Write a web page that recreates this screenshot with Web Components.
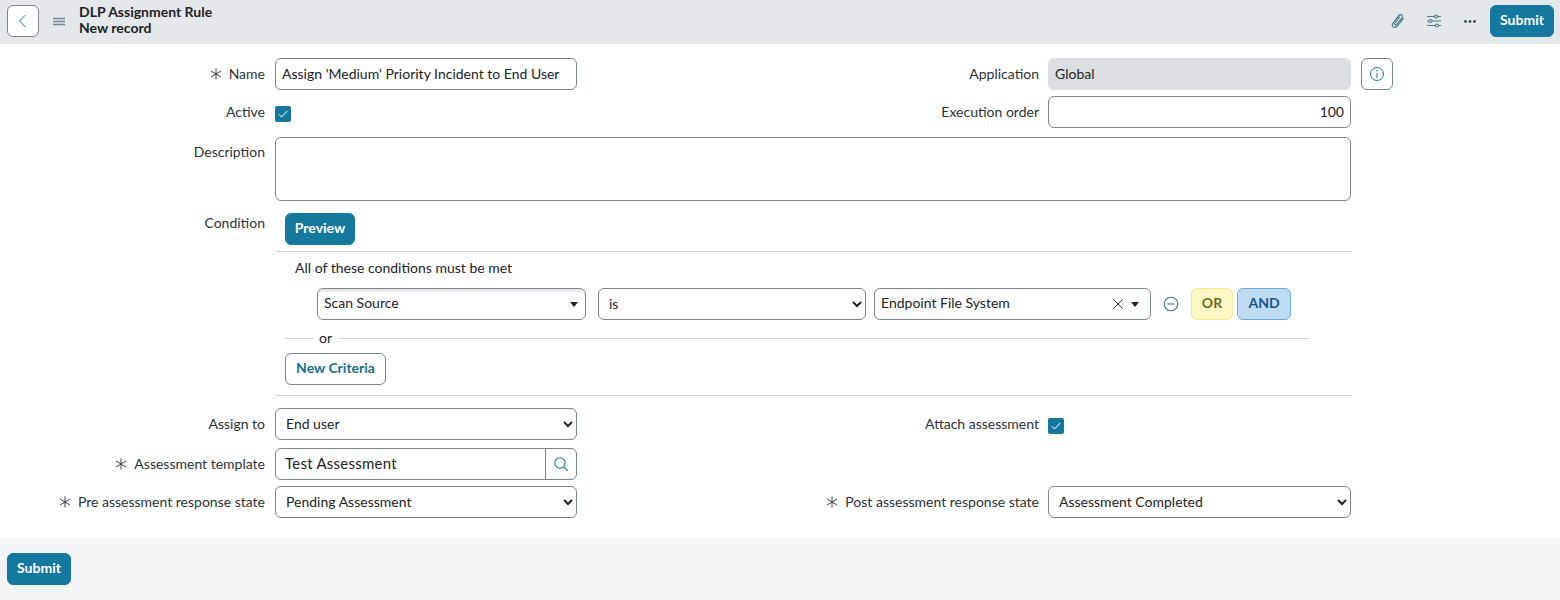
<!DOCTYPE html>
<html lang="en">
<head>
<meta charset="utf-8">
<title>DLP Assignment Rule</title>
<style>
  html, body { margin: 0; padding: 0; background: #f4f5f7; }
  body { font-family: Lato, "Noto Sans", sans-serif; font-size: 14px; color: #1c2327; }
</style>
</head>
<body>

<record-header title-text="DLP Assignment Rule" subtitle="New record"></record-header>

<record-form>
  <form-row style="--row-gap: 6px">
    <field-label slot="label" required>Name</field-label>
    <text-field slot="control" value="Assign 'Medium' Priority Incident to End User"></text-field>
    <field-label slot="right-label">Application</field-label>
    <text-field slot="right-control" value="Global" readonly></text-field>
    <icon-box slot="extra"></icon-box>
  </form-row>
  <form-row style="--row-gap: 9px">
    <field-label slot="label">Active</field-label>
    <check-box slot="control"></check-box>
    <field-label slot="right-label">Execution order</field-label>
    <text-field slot="right-control" value="100" align="right"></text-field>
  </form-row>
  <form-row style="--row-gap: 12px" wide>
    <field-label slot="label" top style="--label-shift: -1px">Description</field-label>
    <text-area-field slot="control"></text-area-field>
  </form-row>
  <form-row wide style="--row-gap: 12px">
    <field-label slot="label" top style="--label-shift: -6px">Condition</field-label>
    <condition-builder slot="control"></condition-builder>
  </form-row>
  <form-row style="--row-gap: 8px">
    <field-label slot="label">Assign to</field-label>
    <select-field slot="control" options="End user"></select-field>
    <field-label slot="right-label">Attach assessment</field-label>
    <check-box slot="right-control"></check-box>
  </form-row>
  <form-row style="--row-gap: 6px">
    <field-label slot="label" required>Assessment template</field-label>
    <lookup-field slot="control" value="Test Assessment"></lookup-field>
  </form-row>
  <form-row>
    <field-label slot="label" required>Pre assessment response state</field-label>
    <select-field slot="control" options="Pending Assessment"></select-field>
    <field-label slot="right-label" required>Post assessment response state</field-label>
    <select-field slot="right-control" options="Assessment Completed"></select-field>
  </form-row>
</record-form>

<record-footer></record-footer>

<script>
const TEAL = "#15799f";
const BORDER = "#7a868c";

class RecordHeader extends HTMLElement {
  constructor() {
    super();
    this.attachShadow({ mode: "open" });
  }
  connectedCallback() {
    this.shadowRoot.innerHTML = `
      <style>
        :host { display: flex; align-items: flex-start; height: 44px; background: #e4e8ea; padding: 5px 6px 0 7px; box-sizing: border-box; }
        .back { width: 32px; height: 32px; padding: 0; box-sizing: border-box; border: 1px solid ${BORDER}; border-radius: 6px; background: #fff; display: flex; align-items: center; justify-content: center; }
        .menu { margin: 11.5px 0 0 14px; width: 12px; height: 10px; display: flex; }
        .titles { margin: -1px 0 0 14px; font-weight: 700; font-size: 14px; line-height: 16px; color: #1c2327; }
        .tools { margin-left: auto; display: flex; align-items: center; }
        .tool { display: flex; width: 16px; height: 16px; }
        action-button { margin-left: 12px; }
      </style>
      <button class="back" aria-label="Back">
        <svg width="12" height="14" viewBox="0 0 12 14" fill="none" stroke="${TEAL}" stroke-width="1"><path d="M8.500 1 2.500 7l6 6"/></svg>
      </button>
      <span class="menu">
        <svg width="12" height="10" viewBox="0 0 12 10" fill="none" stroke="#6d8a98" stroke-width="1.400"><path d="M0 1.500h12M0 4.500h12M0 7.500h12"/></svg>
      </span>
      <div class="titles"><div>${this.getAttribute("title-text")}</div><div>${this.getAttribute("subtitle")}</div></div>
      <div class="tools">
        <span class="tool" style="margin-left:1px">
          <svg width="16" height="16" viewBox="0 0 16 16" fill="none" stroke="#3f7488" stroke-width="1.100" stroke-linecap="round"><path d="M13.200 5.600 7.400 12.900c-1.200 1.500-3 1.900-4.200 1-1.200-1-1.100-2.800.1-4.300l5.300-6.700c.9-1.100 2.300-1.500 3.200-.8.900.7.800 2.100-.1 3.200L6.600 11.400c-.5.600-1.300.8-1.800.4-.5-.4-.4-1.200.1-1.800l4.600-5.800"/></svg>
        </span>
        <span class="tool" style="margin-left:20px">
          <svg width="16" height="16" viewBox="0 0 16 16" fill="none" stroke="#4f7a8c" stroke-width="1.100"><path d="M1 3.500h7.500M11.500 3.500H15M1 8h2M6 8h9M1 12.500h8.500M12.500 12.500H15"/><circle cx="10" cy="3.500" r="1.500"/><circle cx="4.500" cy="8" r="1.500"/><circle cx="11" cy="12.500" r="1.500"/></svg>
        </span>
        <span class="tool" style="margin-left:20px">
          <svg width="16" height="16" viewBox="0 0 16 16" fill="#33566a"><circle cx="3.500" cy="8.500" r="1.400"/><circle cx="8" cy="8.500" r="1.400"/><circle cx="12.500" cy="8.500" r="1.400"/></svg>
        </span>
        <action-button style="--btn-width: 64px">Submit</action-button>
      </div>
    `;
  }
}

class ActionButton extends HTMLElement {
  constructor() {
    super();
    this.attachShadow({ mode: "open" });
  }
  connectedCallback() {
    const outline = this.hasAttribute("outline");
    this.shadowRoot.innerHTML = `
      <style>
        :host { display: inline-flex; }
        button {
          width: var(--btn-width, auto); height: 32px; padding: 0 1px 4px; border-radius: 6px; font: 700 14px Lato, sans-serif;
          border: 1px solid ${outline ? BORDER : TEAL};
          background: ${outline ? "#fff" : TEAL};
          color: ${outline ? "#146e8f" : "#fff"};
        }
      </style>
      <button type="button"><slot></slot></button>
    `;
  }
}

class RecordForm extends HTMLElement {
  constructor() {
    super();
    this.attachShadow({ mode: "open" });
    this.shadowRoot.innerHTML = `
      <style>
        :host { display: block; background: #fff; height: 495px; box-sizing: border-box; padding-top: 14px; }
      </style>
      <slot></slot>
    `;
  }
}

class FormRow extends HTMLElement {
  constructor() {
    super();
    this.attachShadow({ mode: "open" });
    this.shadowRoot.innerHTML = `
      <style>
        :host { display: grid; grid-template-columns: 265px 312px 462px 312px 42px; margin-bottom: var(--row-gap, 0); }
        .control { margin-left: 10px; width: 302px; }
        :host([wide]) .control { width: 1076px; }
        .rcontrol { margin-left: 9px; }
        .extra { margin-left: 10px; }
        :host([wide]) .rlabel, :host([wide]) .rcontrol, :host([wide]) .extra { display: none; }
      </style>
      <div><slot name="label"></slot></div>
      <div class="control"><slot name="control"></slot></div>
      <div class="rlabel"><slot name="right-label"></slot></div>
      <div class="rcontrol"><slot name="right-control"></slot></div>
      <div class="extra"><slot name="extra"></slot></div>
    `;
  }
}

class FieldLabel extends HTMLElement {
  constructor() {
    super();
    this.attachShadow({ mode: "open" });
  }
  connectedCallback() {
    const req = this.hasAttribute("required");
    this.shadowRoot.innerHTML = `
      <style>
        :host { display: flex; justify-content: flex-end; align-items: center; min-height: 32px; padding-bottom: 1px; box-sizing: border-box; font-size: 14px; color: #2a3338; white-space: nowrap; gap: 7px; }
        :host([top]) { align-items: flex-start; line-height: 32px; margin-top: var(--label-shift, 0); }
        svg { flex: none; }
      </style>
      ${req ? `<svg width="12" height="12" viewBox="0 0 12 12" fill="none" stroke="#3a4348" stroke-width="1"><path d="M6 .5v11M1 3l10 6M11 3 1 9"/></svg>` : ""}
      <span><slot></slot></span>
    `;
  }
}

class TextField extends HTMLElement {
  constructor() {
    super();
    this.attachShadow({ mode: "open" });
  }
  connectedCallback() {
    const readonly = this.hasAttribute("readonly");
    this.shadowRoot.innerHTML = `
      <style>
        :host { display: block; }
        .box {
          height: 32px; box-sizing: border-box; border: 1px solid ${readonly ? "#dcdfe2" : BORDER}; border-radius: 6px;
          background: ${readonly ? "#dcdfe2" : "#fff"}; padding: 0 6px 2px; display: flex; align-items: center;
          font-size: 14px; color: #1c2327; white-space: nowrap; overflow: hidden;
          justify-content: ${this.getAttribute("align") === "right" ? "flex-end" : "flex-start"};
        }
      </style>
      <div class="box">${this.getAttribute("value") || ""}</div>
    `;
  }
}

class TextAreaField extends HTMLElement {
  constructor() {
    super();
    this.attachShadow({ mode: "open" });
    this.shadowRoot.innerHTML = `
      <style>
        :host { display: block; }
        div { height: 64px; box-sizing: border-box; border: 1px solid ${BORDER}; border-radius: 6px; background: #fff; }
      </style>
      <div></div>
    `;
  }
}

class CheckBox extends HTMLElement {
  constructor() {
    super();
    this.attachShadow({ mode: "open" });
    this.shadowRoot.innerHTML = `
      <style>
        :host { display: flex; align-items: center; height: 32px; padding-top: 3px; box-sizing: border-box; }
        div { width: 16px; height: 16px; border-radius: 2px; background: ${TEAL}; display: flex; align-items: center; justify-content: center; }
      </style>
      <div><svg width="10" height="8" viewBox="0 0 10 8" fill="none" stroke="#fff" stroke-width="1"><path d="M.8 4.200 3.600 7 9.200 1"/></svg></div>
    `;
  }
}

class SelectField extends HTMLElement {
  constructor() {
    super();
    this.attachShadow({ mode: "open" });
  }
  connectedCallback() {
    const opts = (this.getAttribute("options") || "").split("|");
    this.shadowRoot.innerHTML = `
      <style>
        :host { display: block; }
        select {
          display: block; width: 100%; height: 32px; box-sizing: border-box; border: 1px solid ${BORDER}; border-radius: 6px;
          background-color: #fff; padding: 0 6px 2px; font: 14px Lato, sans-serif; color: #1c2327; outline: none;
        }
      </style>
      <select>${opts.map(o => `<option>${o}</option>`).join("")}</select>
    `;
  }
}

class LookupField extends HTMLElement {
  constructor() {
    super();
    this.attachShadow({ mode: "open" });
  }
  connectedCallback() {
    this.shadowRoot.innerHTML = `
      <style>
        :host { display: flex; height: 32px; box-sizing: border-box; border: 1px solid ${BORDER}; border-radius: 6px; background: #fff; overflow: hidden; }
        .val { flex: 1; padding: 0 0 2px 9px; display: flex; align-items: center; font-size: 15px; letter-spacing: 0.25px; color: #1c2327; }
        .btn { width: 30px; border-left: 1px solid ${BORDER}; display: flex; align-items: center; justify-content: center; }
      </style>
      <div class="val">${this.getAttribute("value")}</div>
      <div class="btn">
        <svg width="16" height="16" viewBox="0 0 16 16" fill="none" stroke="${TEAL}" stroke-width="1.100"><circle cx="7" cy="7" r="5.200"/><path d="m10.800 10.800 4 4"/></svg>
      </div>
    `;
  }
}

class IconBox extends HTMLElement {
  constructor() {
    super();
    this.attachShadow({ mode: "open" });
    this.shadowRoot.innerHTML = `
      <style>
        :host { display: flex; width: 32px; height: 32px; box-sizing: border-box; border: 1px solid ${BORDER}; border-radius: 6px; background: #fff; align-items: center; justify-content: center; }
      </style>
      <svg width="16" height="16" viewBox="0 0 16 16" fill="none" stroke="${TEAL}" stroke-width="1"><circle cx="8" cy="8" r="6.500"/><path d="M8 7v5M8 4v1.500"/></svg>
    `;
  }
}

class ChoiceBox extends HTMLElement {
  constructor() {
    super();
    this.attachShadow({ mode: "open" });
  }
  connectedCallback() {
    const clear = this.hasAttribute("clearable");
    this.shadowRoot.innerHTML = `
      <style>
        :host { display: flex; align-items: center; height: 32px; box-sizing: border-box; border: 1px solid ${BORDER}; border-radius: 6px; background: #fff; padding: 0 11px 0 6px; font-size: 14px; color: #1c2327; }
        :host([shaded]) { box-shadow: inset 0 3px 0 #e6e8ea; padding-right: 7px; }
        .txt { flex: 1; white-space: nowrap; padding-bottom: 4px; }
        .x { margin-right: 8px; display: flex; }
        .arrow { width: 0; height: 0; border-left: 4px solid transparent; border-right: 4px solid transparent; border-top: 5px solid #1c2327; margin-top: 1px; }
      </style>
      <span class="txt"><slot></slot></span>
      ${clear ? `<span class="x"><svg width="10" height="10" viewBox="0 0 10 10" fill="none" stroke="#333" stroke-width="1"><path d="m.5.500 9 9M9.500.500l-9 9"/></svg></span>` : ""}
      <span class="arrow"></span>
    `;
  }
}

class ConditionBuilder extends HTMLElement {
  constructor() {
    super();
    this.attachShadow({ mode: "open" });
    this.shadowRoot.innerHTML = `
      <style>
        :host { display: block; }
        .top { padding-left: 10px; height: 38px; }
        .rule { height: 1px; background: #cfd5d8; }
        .title { padding: 8px 0 0 20px; line-height: 16px; font-size: 14px; color: #1c2327; }
        .line { display: flex; align-items: center; margin: 12px 0 0 42px; }
        .c1 { width: 269px; }
        .c2 { width: 268px; margin-left: 12px; }
        .c3 { width: 277px; margin-left: 8px; }
        .minus { margin-left: 12px; display: flex; }
        .chip { height: 32px; box-sizing: border-box; padding-bottom: 3px; border-radius: 6px; display: flex; align-items: center; justify-content: center; font-weight: 700; font-size: 14px; }
        .or { margin-left: 12px; width: 42px; background: #fbf8c3; border: 1px solid #f2ea8c; color: #6f6b1a; }
        .and { margin-left: 4px; width: 54px; background: #bddbf2; border: 1px solid #6eaee0; color: #12578f; }
        .sep { display: flex; align-items: center; margin: 10px 42px 0 10px; height: 16px; font-size: 14px; color: #1c2327; }
        .sep i { height: 1px; background: #cfd5d8; }
        .sep span { padding: 0 6px; margin-top: -2px; }
        .new { padding: 7px 0 10px 10px; }
      </style>
      <div class="top"><action-button style="--btn-width: 70px">Preview</action-button></div>
      <div class="rule"></div>
      <div class="title">All of these conditions must be met</div>
      <div class="line">
        <choice-box class="c1" shaded>Scan Source</choice-box>
        <select-field class="c2" options="is"></select-field>
        <choice-box class="c3" clearable>Endpoint File System</choice-box>
        <span class="minus"><svg width="16" height="16" viewBox="0 0 16 16" fill="none" stroke="#2f7590" stroke-width="1.100"><circle cx="8" cy="8" r="6.800"/><path d="M4.500 8h7"/></svg></span>
        <div class="chip or">OR</div>
        <div class="chip and">AND</div>
      </div>
      <div class="sep"><i style="width:28px"></i><span>or</span><i style="flex:1"></i></div>
      <div class="new"><action-button outline style="--btn-width: 101px">New Criteria</action-button></div>
      <div class="rule"></div>
    `;
  }
}

class RecordFooter extends HTMLElement {
  constructor() {
    super();
    this.attachShadow({ mode: "open" });
    this.shadowRoot.innerHTML = `
      <style>
        :host { display: block; background: #f4f5f7; padding: 14px 7px 15px; height: 61px; box-sizing: border-box; }
      </style>
      <action-button style="--btn-width: 64px">Submit</action-button>
    `;
  }
}

customElements.define("action-button", ActionButton);
customElements.define("record-header", RecordHeader);
customElements.define("record-form", RecordForm);
customElements.define("form-row", FormRow);
customElements.define("field-label", FieldLabel);
customElements.define("text-field", TextField);
customElements.define("text-area-field", TextAreaField);
customElements.define("check-box", CheckBox);
customElements.define("select-field", SelectField);
customElements.define("lookup-field", LookupField);
customElements.define("icon-box", IconBox);
customElements.define("choice-box", ChoiceBox);
customElements.define("condition-builder", ConditionBuilder);
customElements.define("record-footer", RecordFooter);
</script>
</body>
</html>
